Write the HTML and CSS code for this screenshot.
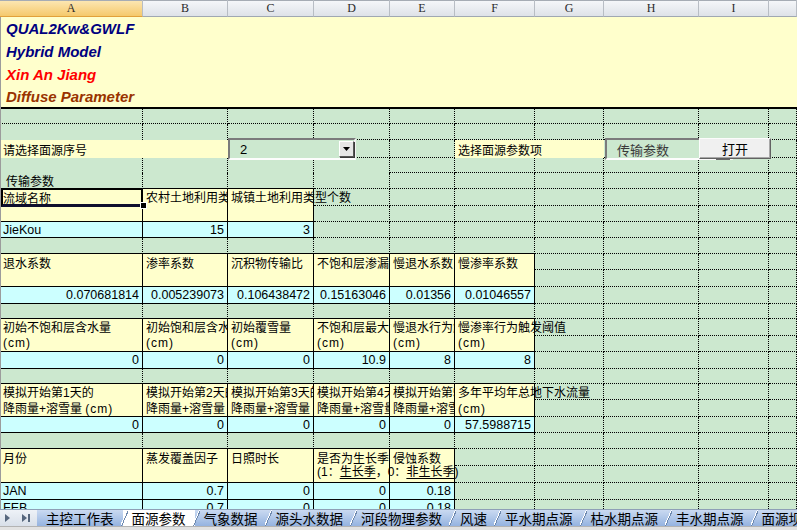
FILE: index.html
```html
<!DOCTYPE html>
<html lang="zh">
<head>
<meta charset="utf-8">
<title>Diffuse Parameter</title>
<link rel="stylesheet" href="styles.css">
</head>
<body>
<div class="sheet">
  <div class="h sel">A</div><div class="h">B</div><div class="h">C</div><div class="h">D</div><div class="h">E</div><div class="h">F</div><div class="h">G</div><div class="h">H</div><div class="h">I</div><div class="h"></div>

  <div class="banner">
    <p class="navy">QUAL2Kw&amp;GWLF</p>
    <p class="navy">Hybrid Model</p>
    <p class="red">Xin An Jiang</p>
    <p class="brown last">Diffuse Parameter</p>
  </div>

  <div class="g"></div><div class="g"></div><div class="g"></div><div class="g"></div><div class="g"></div><div class="g"></div><div class="g"></div><div class="g"></div><div class="g"></div><div class="g"></div>

  <div class="gn"></div><div class="gn"></div><div class="g"></div><div class="g"></div><div class="g"></div><div class="g"></div><div class="g"></div><div class="g"></div><div class="g"></div><div class="g"></div>

  <div class="lab"><span>请选择面源序号</span></div><div class="g"></div><div class="g"></div><div class="g"></div><div class="lab"><span>选择面源参数项</span></div><div class="g"></div><div class="g"></div><div class="g"></div>

  <div class="gn"></div><div class="gn"></div><div class="gn"></div><div class="gn"></div><div class="g"></div><div class="g"></div><div class="g"></div><div class="g"></div><div class="g"></div><div class="g"></div>

  <div class="g t ind"><span>传输参数</span></div><div class="g"></div><div class="g"></div><div class="g"></div><div class="g"></div><div class="g"></div><div class="g"></div><div class="g"></div><div class="g"></div><div class="g"></div>

  <div class="ya t"><span>流域名称</span></div><div class="yh p10"><span>农村土地利用类</span></div><div class="yh p10 ov"><span>城镇土地利用类型个数</span></div><div class="g"></div><div class="g"></div><div class="g"></div><div class="g"></div><div class="g"></div><div class="g"></div><div class="g"></div>
  <div class="ya yb"></div><div class="g"></div><div class="g"></div><div class="g"></div><div class="g"></div><div class="g"></div><div class="g"></div><div class="g"></div>

  <div class="cy"><span>JieKou</span></div><div class="cy num"><span>15</span></div><div class="cy num"><span>3</span></div><div class="g"></div><div class="g"></div><div class="g"></div><div class="g"></div><div class="g"></div><div class="g"></div><div class="g"></div>

  <div class="g"></div><div class="g"></div><div class="g"></div><div class="g"></div><div class="g"></div><div class="g"></div><div class="g"></div><div class="g"></div><div class="g"></div><div class="g"></div>

  <div class="yh p14"><span>退水系数</span></div><div class="yh p14"><span>渗率系数</span></div><div class="yh p14"><span>沉积物传输比</span></div><div class="yh p14"><span>不饱和层渗漏系</span></div><div class="yh p14"><span>慢退水系数</span></div><div class="yh p14"><span>慢渗率系数</span></div><div class="g"></div><div class="g"></div><div class="g"></div><div class="g"></div>
  <div class="g"></div><div class="g"></div><div class="g"></div><div class="g"></div>

  <div class="cy num"><span>0.070681814</span></div><div class="cy num"><span>0.005239073</span></div><div class="cy num"><span>0.106438472</span></div><div class="cy num"><span>0.15163046</span></div><div class="cy num"><span>0.01356</span></div><div class="cy num"><span>0.01046557</span></div><div class="g"></div><div class="g"></div><div class="g"></div><div class="g"></div>

  <div class="g"></div><div class="g"></div><div class="g"></div><div class="g"></div><div class="g"></div><div class="g"></div><div class="g"></div><div class="g"></div><div class="g"></div><div class="g"></div>

  <div class="yh"><span>初始不饱和层含水量<br><b class="cm">(cm)</b></span></div><div class="yh"><span>初始饱和层含水<br><b class="cm">(cm)</b></span></div><div class="yh"><span>初始覆雪量<br><b class="cm">(cm)</b></span></div><div class="yh"><span>不饱和层最大含<br><b class="cm">(cm)</b></span></div><div class="yh"><span>慢退水行为触<br><b class="cm">(cm)</b></span></div><div class="yh ov"><span>慢渗率行为触发阈值<br><b class="cm">(cm)</b></span></div><div class="g"></div><div class="g"></div><div class="g"></div><div class="g"></div>
  <div class="g"></div><div class="g"></div><div class="g"></div><div class="g"></div>

  <div class="cy num"><span>0</span></div><div class="cy num"><span>0</span></div><div class="cy num"><span>0</span></div><div class="cy num"><span>10.9</span></div><div class="cy num"><span>8</span></div><div class="cy num"><span>8</span></div><div class="g"></div><div class="g"></div><div class="g"></div><div class="g"></div>

  <div class="g"></div><div class="g"></div><div class="g"></div><div class="g"></div><div class="g"></div><div class="g"></div><div class="g"></div><div class="g"></div><div class="g"></div><div class="g"></div>

  <div class="yh p22"><span>模拟开始第1天的<br>降雨量+溶雪量 <b class="cm">(cm)</b></span></div><div class="yh p22"><span>模拟开始第2天的<br>降雨量+溶雪量</span></div><div class="yh p22"><span>模拟开始第3天的<br>降雨量+溶雪量</span></div><div class="yh p22"><span>模拟开始第4天<br>降雨量+溶雪量</span></div><div class="yh p22"><span>模拟开始第5<br>降雨量+溶雪</span></div><div class="yh p22 ov"><span>多年平均年总地下水流量<br><b class="cm">(cm)</b></span></div><div class="g"></div><div class="g"></div><div class="g"></div><div class="g"></div>
  <div class="g"></div><div class="g"></div><div class="g"></div><div class="g"></div>

  <div class="cy num"><span>0</span></div><div class="cy num"><span>0</span></div><div class="cy num"><span>0</span></div><div class="cy num"><span>0</span></div><div class="cy num"><span>0</span></div><div class="cy num"><span>57.5988715</span></div><div class="g"></div><div class="g"></div><div class="g"></div><div class="g"></div>

  <div class="g"></div><div class="g"></div><div class="g"></div><div class="g"></div><div class="g"></div><div class="g"></div><div class="g"></div><div class="g"></div><div class="g"></div><div class="g"></div>

  <div class="yh p26"><span>月份</span></div><div class="yh p26"><span>蒸发覆盖因子</span></div><div class="yh p26"><span>日照时长</span></div><div class="yh p26 ov"><span>是否为生长季<br>(1：<u>生长季</u>，0：<u>非生长季</u>)</span></div><div class="yh1 p26"><span>侵蚀系数</span></div><div class="g"></div><div class="g"></div><div class="g"></div><div class="g"></div><div class="g"></div>
  <div class="yb2"></div><div class="g"></div><div class="g"></div><div class="g"></div><div class="g"></div><div class="g"></div>

  <div class="cy"><span>JAN</span></div><div class="cy num"><span>0.7</span></div><div class="cy num"><span>0</span></div><div class="cy num"><span>0</span></div><div class="cy num"><span>0.18</span></div><div class="g"></div><div class="g"></div><div class="g"></div><div class="g"></div><div class="g"></div>

  <div class="cy"><span>FEB</span></div><div class="cy num"><span>0.7</span></div><div class="cy num"><span>0</span></div><div class="cy num"><span>0</span></div><div class="cy num"><span>0.18</span></div><div class="g"></div><div class="g"></div><div class="g"></div><div class="g"></div><div class="g"></div>

  <div class="combo c1"><span class="cv">2</span><span class="dd"><svg width="7" height="4" viewBox="0 0 7 4"><path d="M0 0H7L3.5 4Z" fill="#000"/></svg></span></div>
  <div class="combo c2"><span class="cv">传输参数</span></div>
  <div class="ddbar"></div>
  <div class="btn">打开</div>
  <div class="selbox"></div>
  <div class="handle"></div>
</div>

<div class="tabbar">
  <div class="nav">
    <svg width="5" height="8" viewBox="0 0 5 8"><path d="M0 0L5 4L0 8Z" fill="#56677d"/></svg>
    <svg width="8" height="8" viewBox="0 0 8 8"><path d="M0 0L5 4L0 8Z" fill="#56677d"/><rect x="6" y="0" width="2" height="8" fill="#56677d"/></svg>
  </div>
  <div class="tab first">主控工作表</div>
  <div class="tab active">面源参数</div>
  <div class="tab">气象数据</div>
  <div class="tab">源头水数据</div>
  <div class="tab">河段物理参数</div>
  <div class="tab">风速</div>
  <div class="tab">平水期点源</div>
  <div class="tab">枯水期点源</div>
  <div class="tab">丰水期点源</div>
  <div class="tab">面源坝塘</div>
</div>
<div class="status"></div>
</body>
</html>
```

FILE: styles.css
```css
* { box-sizing: border-box; }
html, body { margin: 0; padding: 0; }
body {
  width: 797px;
  height: 530px;
  overflow: hidden;
  background: #CCE8CF;
  font-family: "Liberation Sans", "Noto Sans CJK SC", sans-serif;
  font-size: 12px;
  color: #000;
}

.sheet {
  position: relative;
  display: grid;
  grid-template-columns: 143px 85px 86px 76px 65px 80px 69px 95px 70px 28px;
  grid-template-rows: 17px 92px 15px 16px 18px 15px 16px 17px 16px 16px 16px 16px 17px 17px 15px 17px 16px 17px 15px 16px 17px 16px 16px 17px 17px 17px 17px;
  height: 509px;
  overflow: hidden;
  background: #CCE8CF;
}
.sheet::before {
  content: "";
  position: absolute;
  left: 0;
  top: 17px;
  bottom: 0;
  width: 1px;
  background: #9c9c9c;
  z-index: 4;
}
.sheet > div > span { position: relative; z-index: 1; }

/* column headers */
.h {
  background: linear-gradient(#F6F8FA, #DEE2E8);
  border-right: 1px solid #B8BDC4;
  border-bottom: 1px solid #A0A8B2;
  box-shadow: inset 0 1px 0 #A6ACB4;
  font: 12px/17px "Liberation Serif", serif;
  text-align: center;
  color: #2a2a2a;
}
.h.sel {
  background: linear-gradient(#FCE8B6, #F5C96C);
  border-bottom-color: #E1A13A;
}

/* title banner */
.banner {
  grid-column: 1 / -1;
  background: #FFFFCC;
  border-bottom: 2px solid #000;
  padding-left: 6px;
  font: italic bold 15px/23px "Liberation Sans", sans-serif;
}
.banner p { margin: 0; height: 23px; }
.banner p.last { height: 21px; line-height: 21px; }
.navy { color: #000080; }
.red { color: #FF0000; }
.brown { color: #993300; }

/* green grid cells */
.g { border-right: 1px dotted #000; border-bottom: 1px dotted #000; }
.gn { border-right: 1px dotted #000; }
.t { display: flex; align-items: center; white-space: nowrap; padding: 0 3px; }
.ind { padding-left: 6px; }

/* yellow labels */
.lab {
  grid-column: span 2;
  background: #FFFFCC;
  padding-left: 3px;
  display: flex;
  align-items: center;
  white-space: nowrap;
}

.ya { background: #FFFFCC; border-right: 1px solid #000; }
.yb { border-bottom: 1px solid #000; }

/* yellow header cells */
.yh {
  grid-row: span 2;
  background: #FFFFCC;
  border-right: 1px solid #000;
  border-bottom: 1px solid #000;
  box-shadow: 0 -1px 0 #000, -1px 0 0 #000;
  padding: 2px 0 0 3px;
  line-height: 15px;
  white-space: nowrap;
  overflow: hidden;
}
.yh1 {
  background: #FFFFCC;
  border-right: 1px solid #000;
  box-shadow: 0 -1px 0 #000, -1px 0 0 #000;
  padding: 2px 0 0 3px;
  white-space: nowrap;
  overflow: hidden;
}
.yb2 {
  background: #FFFFCC;
  border-right: 1px solid #000;
  border-bottom: 1px solid #000;
}
.ov { overflow: visible; }
.p10 { padding-top: 1px; line-height: 16px; }
.p14 { padding-top: 3px; }
.p22 { padding-top: 1px; line-height: 16px; }
.p26 { padding-top: 4px; line-height: 13px; }
.cm { font-weight: normal; letter-spacing: 1px; }
u { text-underline-offset: 2px; }

/* cyan value cells */
.cy {
  background: #CCFFFF;
  border-right: 1px solid #000;
  border-bottom: 1px solid #000;
  padding: 0 3px;
  display: flex;
  align-items: center;
  white-space: nowrap;
  overflow: hidden;
  font-size: 12.5px;
}
.num { justify-content: flex-end; }

/* form controls over the sheet */
.combo {
  position: absolute;
  z-index: 5;
  top: 138px;
  width: 128px;
  height: 22px;
  border: 2px solid;
  border-color: #7b7b7b #f2f2f2 #fdfdfd #7b7b7b;
  background: #CCE8CF;
  display: flex;
  align-items: center;
  padding-left: 10px;
  font-size: 13px;
  white-space: nowrap;
}
.c1 { left: 228px; }
.c2 { left: 605px; color: #3a3a3a; }
.sheet .combo .dd {
  position: absolute;
  z-index: 2;
  right: 0;
  top: 1px;
  width: 15px;
  height: 16px;
  background: #E6E6E6;
  border: 1px solid;
  border-color: #ffffff #555555 #555555 #ffffff;
  box-shadow: 1px 1px 0 #3a3a3a;
  display: flex;
  align-items: center;
  justify-content: center;
}
.dd svg { display: block; }
.ddbar {
  position: absolute;
  z-index: 6;
  left: 716px;
  top: 157px;
  width: 14px;
  height: 3px;
  background: #676767;
}
.btn {
  position: absolute;
  z-index: 7;
  left: 699px;
  top: 138px;
  width: 72px;
  height: 21px;
  background: #F0F0F0;
  border: 1px solid;
  border-color: #fcfcfc #626262 #626262 #fcfcfc;
  box-shadow: inset -1px -1px 0 #a8a8a8;
  font-size: 13px;
  display: flex;
  align-items: center;
  justify-content: center;
}
.selbox {
  position: absolute;
  z-index: 5;
  left: 1px;
  top: 188px;
  width: 142px;
  height: 19px;
  border: 2px solid #000;
  border-bottom: 3px solid #0e0e2e;
}
.handle {
  position: absolute;
  z-index: 6;
  left: 140px;
  top: 202px;
  width: 7px;
  height: 7px;
  background: #000;
  border: 1px solid #fff;
}

/* sheet tabs */
.tabbar {
  display: flex;
  height: 17px;
  overflow: hidden;
  white-space: nowrap;
  background: linear-gradient(#EEF2F7, #D8DFE9);
  border-top: 1px solid #8E9FB6;
}
.nav {
  flex: none;
  width: 37px;
  display: flex;
  align-items: center;
  gap: 12px;
  padding-left: 5px;
}
.nav svg { display: block; }
.tab {
  flex: none;
  position: relative;
  padding: 0 9px;
  font: 13.5px/16px "Noto Sans CJK SC", sans-serif;
  background: linear-gradient(#CADAF1, #95B3E0);
  color: #000;
}
.tab.active { background: #FFFFFF; }
.tab + .tab::before {
  content: "";
  position: absolute;
  left: -2px;
  top: 0;
  width: 7px;
  height: 16px;
  background: linear-gradient(to bottom right, transparent calc(50% - 1px), #ffffff calc(50% - 1px), #ffffff 50%, #6E89AF 50%, #6E89AF calc(50% + 1px), transparent calc(50% + 1px));
}
.status {
  height: 4px;
  background: #E2E2E2;
  border-top: 1px solid #B3B3B3;
}
```
